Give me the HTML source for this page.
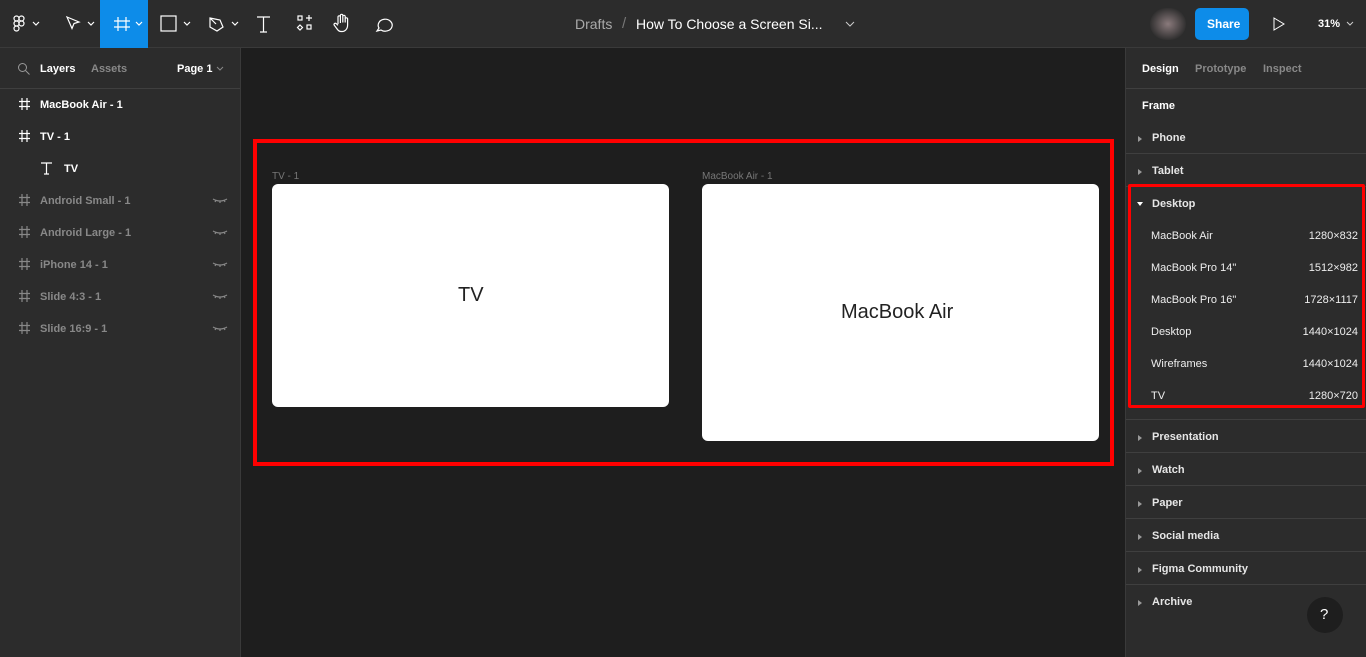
<!DOCTYPE html>
<html><head><meta charset="utf-8"><style>
*{box-sizing:border-box;margin:0;padding:0}
body{width:1366px;height:657px;background:#1e1e1e;font-family:"Liberation Sans",sans-serif;overflow:hidden;position:relative;color:#fff}
.abs{position:absolute}
.top{left:0;top:0;width:1366px;height:48px;background:#2c2c2c;border-bottom:1px solid #3a3a3a}
.left{left:0;top:48px;width:241px;height:609px;background:#2c2c2c;border-right:1px solid #3a3a3a}
.right{left:1125px;top:48px;width:241px;height:609px;background:#2c2c2c;border-left:1px solid #3a3a3a}
.t{position:absolute;font-size:11px;font-weight:bold;white-space:nowrap}
.hr{position:absolute;left:0;width:241px;height:1px;background:#3f3f3f}
.sec{position:absolute;left:0;width:241px;height:33px;border-top:1px solid #3f3f3f}
.sec span{position:absolute;left:26px;top:11px;font-size:11px;font-weight:bold;color:#e6e6e6}
.sec i{position:absolute;left:12px;top:15px;width:0;height:0;border-top:3px solid transparent;border-bottom:3px solid transparent;border-left:4px solid #999}
.row span{position:absolute;font-size:11px;color:#eee}
.dim{color:#888}
</style></head><body>
<div class="abs top">
 <div class="abs" style="left:100px;top:0;width:48px;height:48px;background:#0d8ce9"></div>
 <svg class="abs" style="left:0;top:0" width="420" height="48" fill="none" stroke="#fff" stroke-width="1.2">
  <g transform="translate(14,16)"><rect x="0" y="0" width="5" height="5" rx="2.5"/><rect x="5" y="0" width="5" height="5" rx="2.5"/><rect x="0" y="5" width="5" height="5" rx="2.5"/><circle cx="7.5" cy="7.5" r="2.5"/><rect x="0" y="10" width="5" height="5" rx="2.5"/></g>
  <path d="M33 22l3 3 3-3"/>
  <path d="M67 17l12 5-5 1.5-2 5z"/><path d="M88 22l3 3 3-3"/>
  <path d="M118 17v14M126 17v14M114 21h16M114 27h16"/><path d="M136 22l3 3 3-3"/>
  <rect x="161" y="16" width="15" height="15"/><path d="M184 22l3 3 3-3"/>
  <path d="M210 18l10 2 3 7-6 4-7-4z M210 18l6 6"/><path d="M232 22l3 3 3-3"/>
  <path d="M257 17h13M263.5 17v15M260 32h7"/>
  <rect x="298" y="16" width="4" height="4"/><path d="M309 15v6M306 18h6"/><path d="M300 25l2.5 2.5-2.5 2.5-2.5-2.5z"/><rect x="307" y="25" width="4" height="4"/>
  <path d="M338 24v-7a1.2 1.2 0 012.4 0v6M340.4 22v-6.5a1.2 1.2 0 012.4 0v7M342.8 22v-5.5a1.2 1.2 0 012.4 0v6M345.2 22.5v-3.5a1.2 1.2 0 012.4 0v6c0 4-2.5 6.5-5.5 6.5h-1c-2 0-3-1-4-2.5l-3-4a1.3 1.3 0 012-1.5l1.9 1.8"/>
  <path d="M377 31l2-3a7 6 0 112 2z"/>
 </svg>
 <div class="t" style="left:575px;top:16px;font-size:14px;font-weight:normal;color:#aaa">Drafts</div>
 <div class="t" style="left:622px;top:15px;font-size:15px;font-weight:normal;color:#777">/</div>
 <div class="t" style="left:636px;top:16px;font-size:14px;font-weight:normal;color:#fff">How To Choose a Screen Si...</div>
 <svg class="abs" style="left:845px;top:20px" width="10" height="8" fill="none" stroke="#ccc"><path d="M1 2l4 4 4-4"/></svg>
 <div class="abs" style="left:1150px;top:8px;width:36px;height:32px;border-radius:16px;background:radial-gradient(#8a7a7c,#2c2c2c 75%)"></div>
 <div class="abs" style="left:1195px;top:8px;width:54px;height:32px;border-radius:5px;background:#0d8ce9"></div>
 <div class="t" style="left:1207px;top:17px;font-size:12px">Share</div>
 <svg class="abs" style="left:1272px;top:16px" width="14" height="16" fill="none" stroke="#fff"><path d="M2 2l10 6-10 6z"/></svg>
 <div class="t" style="left:1318px;top:18px;font-size:11px">31%</div>
 <svg class="abs" style="left:1346px;top:21px" width="8" height="6" fill="none" stroke="#ccc"><path d="M1 1l3 3 3-3"/></svg>
</div>

<div class="abs left">
 <svg class="abs" style="left:17px;top:14px" width="14" height="14" fill="none" stroke="#999"><circle cx="5.5" cy="5.5" r="4"/><path d="M8.5 8.5l4 4"/></svg>
 <div class="t" style="left:40px;top:15px">Layers</div>
 <div class="t dim" style="left:91px;top:15px">Assets</div>
 <div class="t" style="left:177px;top:15px">Page 1</div>
 <svg class="abs" style="left:216px;top:18px" width="8" height="6" fill="none" stroke="#888"><path d="M1 1l3 3 3-3"/></svg>
 <div class="hr" style="top:40px;width:240px"></div>
</div>

<div class="abs" style="left:253px;top:139px;width:861px;height:327px;border:4px solid #f00"></div>
<div class="t" style="left:272px;top:171px;font-size:10px;font-weight:normal;color:#777">TV - 1</div>
<div class="abs" style="left:272px;top:184px;width:397px;height:223px;background:#fff;border-radius:6px"></div>
<div class="t" style="left:458px;top:284px;font-size:20px;font-weight:normal;color:#222">TV</div>
<div class="t" style="left:702px;top:171px;font-size:10px;font-weight:normal;color:#777">MacBook Air - 1</div>
<div class="abs" style="left:702px;top:184px;width:397px;height:257px;background:#fff;border-radius:6px"></div>
<div class="t" style="left:841px;top:301px;font-size:20px;font-weight:normal;color:#222">MacBook Air</div>

<div class="abs right">
 <div class="t" style="left:16px;top:15px">Design</div>
 <div class="t dim" style="left:69px;top:15px">Prototype</div>
 <div class="t dim" style="left:137px;top:15px">Inspect</div>
 <div class="hr" style="top:40px"></div>
 <div class="t" style="left:16px;top:52px">Frame</div>
 <div class="sec" style="top:73px;border:none"><i></i><span>Phone</span></div>
 <div class="sec" style="top:105px"><i></i><span>Tablet</span></div>
 <div class="sec" style="top:138px"><i style="border-left:3px solid transparent;border-right:3px solid transparent;border-top:4px solid #fff;border-bottom:none;top:15px;left:11px"></i><span>Desktop</span></div>
 <div class="sec" style="top:371px"><i></i><span>Presentation</span></div>
 <div class="sec" style="top:404px"><i></i><span>Watch</span></div>
 <div class="sec" style="top:437px"><i></i><span>Paper</span></div>
 <div class="sec" style="top:470px"><i></i><span>Social media</span></div>
 <div class="sec" style="top:503px"><i></i><span>Figma Community</span></div>
 <div class="sec" style="top:536px"><i></i><span>Archive</span></div>
 <div class="row">
  <span style="left:25px;top:182px">MacBook Air</span><span class="dim" style="right:8px;top:182px">1280×832</span>
  <span style="left:25px;top:214px">MacBook Pro 14"</span><span class="dim" style="right:8px;top:214px">1512×982</span>
  <span style="left:25px;top:246px">MacBook Pro 16"</span><span class="dim" style="right:8px;top:246px">1728×1117</span>
  <span style="left:25px;top:278px">Desktop</span><span class="dim" style="right:8px;top:278px">1440×1024</span>
  <span style="left:25px;top:310px">Wireframes</span><span class="dim" style="right:8px;top:310px">1440×1024</span>
  <span style="left:25px;top:342px">TV</span><span class="dim" style="right:8px;top:342px">1280×720</span>
 </div>
 <div class="abs" style="left:2px;top:136px;width:237px;height:224px;border:3px solid #f00;border-radius:2px"></div>
 <div class="abs" style="left:181px;top:549px;width:36px;height:36px;border-radius:18px;background:#1e1e1e"></div>
 <div class="t" style="left:194px;top:558px;font-size:15px;font-weight:normal">?</div>
</div>

<div class="abs" style="left:0;top:0">
 <svg class="abs" style="left:0;top:0" width="240" height="340" fill="none" stroke-width="1.2">
  <g stroke="#fff"><path d="M22 98v12M27 98v12M19 101.5h11M19 106.5h11"/><path d="M22 130v12M27 130v12M19 133.5h11M19 138.5h11"/><path d="M41 163h11M46.5 163v11M44 174h5"/></g>
  <g stroke="#888"><path d="M22 194v12M27 194v12M19 197.5h11M19 202.5h11"/><path d="M22 226v12M27 226v12M19 229.5h11M19 234.5h11"/><path d="M22 258v12M27 258v12M19 261.5h11M19 266.5h11"/><path d="M22 290v12M27 290v12M19 293.5h11M19 298.5h11"/><path d="M22 322v12M27 322v12M19 325.5h11M19 330.5h11"/>
  <path d="M213 199q7 4 14 0M216 200l-1 2M220 201v2M224 200l1 2"/><path d="M213 231q7 4 14 0M216 232l-1 2M220 233v2M224 232l1 2"/><path d="M213 263q7 4 14 0M216 264l-1 2M220 265v2M224 264l1 2"/><path d="M213 295q7 4 14 0M216 296l-1 2M220 297v2M224 296l1 2"/><path d="M213 327q7 4 14 0M216 328l-1 2M220 329v2M224 328l1 2"/></g>
 </svg>
 <div class="t" style="left:40px;top:99px">MacBook Air - 1</div>
 <div class="t" style="left:40px;top:131px">TV - 1</div>
 <div class="t" style="left:64px;top:163px">TV</div>
 <div class="t dim" style="left:40px;top:195px">Android Small - 1</div>
 <div class="t dim" style="left:40px;top:227px">Android Large - 1</div>
 <div class="t dim" style="left:40px;top:259px">iPhone 14 - 1</div>
 <div class="t dim" style="left:40px;top:291px">Slide 4:3 - 1</div>
 <div class="t dim" style="left:40px;top:323px">Slide 16:9 - 1</div>
</div>
</body></html>
